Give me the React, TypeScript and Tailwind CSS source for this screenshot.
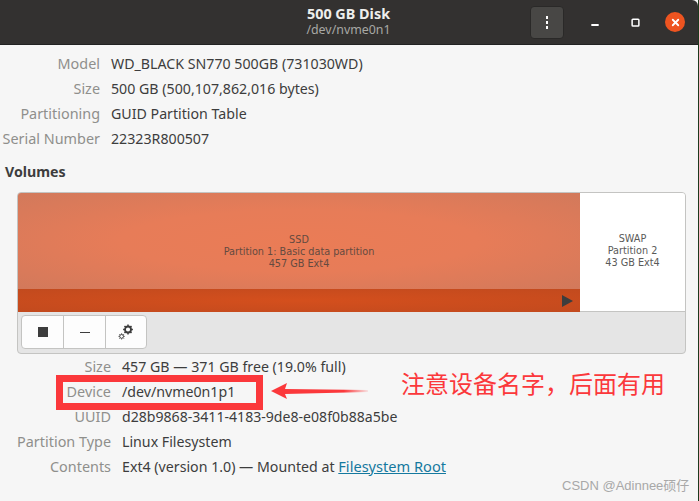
import React from "react";
import { Minus, Square, X } from "lucide-react";

const font = "font-['Noto_Sans','Noto_Sans_CJK_SC',sans-serif]";

const Row = ({ label, value, wide }: { label: string; value: React.ReactNode; wide?: boolean }) => (
  <div className="flex h-[25px] items-center">
    <div className={`${wide ? "w-[111px]" : "w-[100px]"} shrink-0 text-right text-[14.4px] text-[#8f8f8c] whitespace-nowrap`}>{label}</div>
    <div className="ml-[11px] text-[#3d3d3d] whitespace-nowrap">{value}</div>
  </div>
);

const Gears = () => (
  <svg width="16" height="16" viewBox="0 0 16 16" fill="none" stroke="#3d3d3d">
    <circle cx="10" cy="5.5" r="3" strokeWidth="1.8" />
    <path d="M10 .6v2M10 8.4v2M5.1 5.5h2M12.9 5.5h2M6.5 2l1.4 1.4M12.1 7.6l1.4 1.4M6.5 9l1.4-1.4M12.1 3.4l1.4-1.4" strokeWidth="1.5" />
    <circle cx="3.6" cy="12.4" r="1.9" strokeWidth="0.9" />
    <path d="M3.6 9.3v1.2M3.6 14.3v1.2M.5 12.4h1.2M5.5 12.4h1.2M1.4 10.2l.9.9M5 13.7l.9.9M1.4 14.6l.9-.9M5 11.1l.9-.9" strokeWidth="0.9" />
  </svg>
);

export default function App() {
  return (
    <div className={`relative h-[501px] w-[699px] overflow-hidden bg-[#f6f6f6] text-[14.2px] ${font}`}>
      <div className="flex h-[45px] w-[698px] items-center justify-between rounded-tr-md border-b border-[#222] bg-[#333130]">
        <div className="flex w-[530px] flex-none" />
        <div className="absolute left-0 top-0 flex h-[43px] w-[697px] flex-col items-center justify-center leading-[16px]">
          <div className="text-[14.4px] font-bold text-[#eeeeec]">500 GB Disk</div>
          <div className="text-[12.4px] text-[#a8a8a5]">/dev/nvme0n1</div>
        </div>
        <div className="relative flex items-center pr-[3px]">
          <div className="mr-[11px] flex h-[33px] w-[34px] flex-col items-center justify-center gap-[2px] rounded-[4px] border border-[#2a2928] bg-[#484745]">
            <span className="h-[3px] w-[2px] bg-white" />
            <span className="h-[3px] w-[2px] bg-white" />
            <span className="h-[3px] w-[2px] bg-white" />
          </div>
          <div className="flex w-[40px] justify-center">
            <Minus size={10} color="#fff" strokeWidth={2} className="mt-[6px] w-[10px]" absoluteStrokeWidth />
          </div>
          <div className="flex w-[40px] justify-center">
            <Square size={9} color="#fff" strokeWidth={1.5} absoluteStrokeWidth />
          </div>
          <div className="flex w-[40px] justify-center">
            <div className="flex h-[20px] w-[20px] items-center justify-center rounded-full bg-[#ee5420]">
              <X size={11} color="#fff" strokeWidth={1.8} absoluteStrokeWidth />
            </div>
          </div>
        </div>
      </div>

      <div className="pt-[6px]">
        <Row label="Model" value="WD_BLACK SN770 500GB (731030WD)" />
        <Row label="Size" value="500 GB (500,107,862,016 bytes)" />
        <Row label="Partitioning" value="GUID Partition Table" />
        <Row label="Serial Number" value="22323R800507" />
      </div>

      <div className="mt-[11px] pl-[5px] font-bold leading-[20px] text-[#3d3d3d]">Volumes</div>

      <div className="ml-[17px] mt-[10px] h-[162px] w-[669px] overflow-hidden rounded-[4px] border border-[#c4c4c2] bg-[#e5e5e5]">
        <div className="flex h-[119px] border-b border-[#c4c4c2]">
          <div className="relative w-[562px]">
            <div className="flex h-[96px] flex-col items-center justify-center bg-[radial-gradient(ellipse_at_center,#ea7c56_0%,#e77c58_45%,#d2795b_100%)] pt-[21px] text-[9.7px] leading-[12px] text-[#644a40] font-['DejaVu_Sans',sans-serif]">
              <div>SSD</div>
              <div>Partition 1: Basic data partition</div>
              <div>457 GB Ext4</div>
            </div>
            <div className="flex h-[23px] items-center justify-end bg-[radial-gradient(ellipse_at_center,#d44f1d_0%,#c24a1e_100%)] pr-[7px]">
              <div className="h-0 w-0 border-y-[6px] border-l-[11px] border-y-transparent border-l-[#3d3d3d]" />
            </div>
          </div>
          <div className="flex flex-1 flex-col items-center justify-center bg-white pb-[3px] text-[9.7px] leading-[12px] text-[#5a5a58] font-['DejaVu_Sans',sans-serif]">
            <div>SWAP</div>
            <div>Partition 2</div>
            <div>43 GB Ext4</div>
          </div>
        </div>
        <div className="pl-[3px] pt-[3px]">
          <div className="flex h-[34px] w-[126px] rounded-[4px] border border-[#c4c4c2] bg-[#fdfdfd]">
            <div className="flex w-[42px] items-center justify-center border-r border-[#c4c4c2]">
              <span className="h-[10px] w-[10px] bg-[#3d3d3d]" />
            </div>
            <div className="flex w-[42px] items-center justify-center border-r border-[#c4c4c2]">
              <span className="h-px w-[10px] bg-[#3d3d3d]" />
            </div>
            <div className="flex flex-1 items-center justify-center">
              <Gears />
            </div>
          </div>
        </div>
      </div>

      <div className="pt-0">
        <Row wide label="Size" value="457 GB — 371 GB free (19.0% full)" />
        <Row wide label="Device" value="/dev/nvme0n1p1" />
        <Row wide label="UUID" value={<span className="text-[14.1px]">d28b9868-3411-4183-9de8-e08f0b88a5be</span>} />
        <Row wide label="Partition Type" value="Linux Filesystem" />
        <Row
          wide
          label="Contents"
          value={
            <>
              Ext4 (version 1.0) — Mounted at <span className="text-[14.6px] text-[#15799f] underline">Filesystem Root</span>
            </>
          }
        />
      </div>

      {/* annotation on top of the screenshot */}
      <div className="absolute left-[56px] top-[375px] h-[35px] w-[207px] border-[7px] border-[#fb383b]" />
      <svg className="absolute left-[270px] top-[380px]" width="100" height="22" viewBox="0 0 100 22">
        <defs>
          <linearGradient id="fade" x1="0" x2="1" y1="0" y2="0">
            <stop offset="0.75" stopColor="#fb383b" />
            <stop offset="1" stopColor="#fb383b" stopOpacity="0.1" />
          </linearGradient>
        </defs>
        <path d="M1 11 L17 3 L15 9 L98 10 L98 12 L15 14 L17 19 Z" fill="url(#fade)" />
      </svg>
      <div className="absolute left-[401px] top-[366px] whitespace-nowrap text-[24px] leading-[34px] text-[#fb383b] font-['Noto_Sans_CJK_SC',sans-serif]">
        注意设备名字，后面有用
      </div>
      <div className="absolute left-[562px] top-[477px] whitespace-nowrap text-[13px] leading-[18px] text-[#a8a8a8] font-['Liberation_Sans','Noto_Sans_CJK_SC',sans-serif]">
        CSDN @Adinnee硕仔
      </div>
      <div className="absolute right-0 top-0 h-full w-px bg-[#1d3a1c]" />
    </div>
  );
}
